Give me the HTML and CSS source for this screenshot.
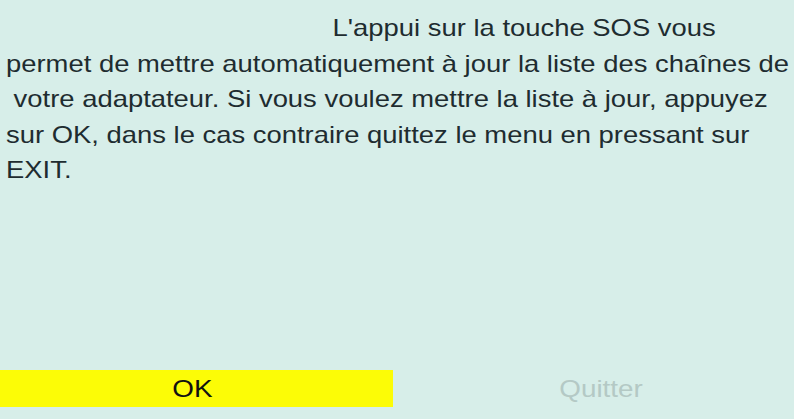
FILE: index.html
```html
<!DOCTYPE html>
<html lang="fr">
<head>
<meta charset="utf-8">
<link rel="stylesheet" href="styles.css">
</head>
<body>
<div class="screen">
  <div class="message">
    <div class="line first">L'appui sur la touche SOS vous</div>
    <div class="line">permet de mettre automatiquement à jour la liste des chaînes de</div>
    <div class="line"> votre adaptateur. Si vous voulez mettre la liste à jour, appuyez</div>
    <div class="line">sur OK, dans le cas contraire quittez le menu en pressant sur</div>
    <div class="line">EXIT.</div>
  </div>
  <div class="buttons">
    <div class="btn ok"><span class="label">OK</span></div>
    <div class="btn quit"><span class="label">Quitter</span></div>
  </div>
</div>
</body>
</html>
```
FILE: styles.css
```css
html, body {
  margin: 0;
  padding: 0;
  background: #d7eee9;
}
.screen {
  width: 794px;
  height: 419px;
  display: flex;
  flex-direction: column;
  font-family: "Liberation Sans", Arial, sans-serif;
  color: #1e2c30;
  overflow: hidden;
}
.message {
  padding: 10px 0 0 6px;
  font-size: 24px;
  line-height: 35.5px;
  flex: 1;
}
.line {
  white-space: pre;
  transform: scaleX(1.142);
  transform-origin: left center;
}
.first {
  text-indent: 286px;
}
.buttons {
  display: flex;
  height: 37px;
  margin-bottom: 12px;
  font-size: 24px;
}
.btn {
  display: flex;
  align-items: center;
  justify-content: center;
}
.label {
  display: inline-block;
  transform: scaleX(1.16);
}
.ok {
  width: 393px;
  padding-right: 8px;
  box-sizing: border-box;
  background: #fcfc06;
  color: #111;
}
.quit {
  flex: 1;
  padding-left: 16px;
  color: #b4c9c5;
}
```
